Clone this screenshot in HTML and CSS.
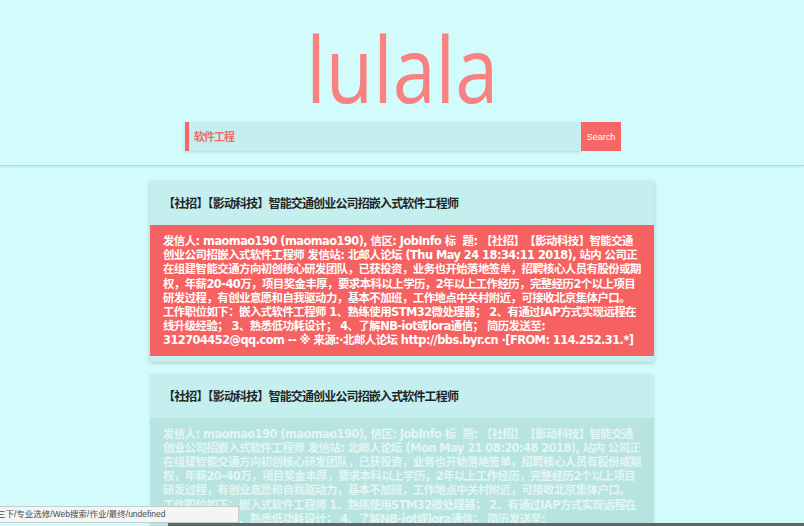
FILE: index.html
```html
<!DOCTYPE html>
<html lang="zh-CN">
<head>
<meta charset="utf-8">
<title>lulala</title>
<link rel="stylesheet" href="styles.css">
</head>
<body>
<header class="top">
  <h1 class="logo">lulala</h1>
  <form class="search">
    <div class="search-input">软件工程</div>
    <button class="search-btn" type="button">Search</button>
  </form>
</header>
<main class="results">
  <article class="card">
    <h2 class="card-title">【社招】【影动科技】智能交通创业公司招嵌入式软件工程师</h2>
    <p class="card-body">发信人: maomao190 (maomao190), 信区: JobInfo 标&nbsp; 题: 【社招】【影动科技】智能交通创业公司招嵌入式软件工程师 发信站: 北邮人论坛 (Thu May 24 18:34:11 2018), 站内 公司正在组建智能交通方向初创核心研发团队，已获投资，业务也开始落地签单，招聘核心人员有股份或期权，年薪20-40万，项目奖金丰厚，要求本科以上学历，2年以上工作经历，完整经历2个以上项目研发过程，有创业意愿和自我驱动力，基本不加班，工作地点中关村附近，可接收北京集体户口。 工作职位如下：嵌入式软件工程师 1、熟练使用STM32微处理器； 2、有通过IAP方式实现远程在线升级经验； 3、熟悉低功耗设计； 4、了解NB-iot或lora通信； 简历发送至: 312704452@qq.com -- ※ 来源:·北邮人论坛 http://bbs.byr.cn ·[FROM: 114.252.31.*]</p>
  </article>
  <article class="card card-faded">
    <h2 class="card-title">【社招】【影动科技】智能交通创业公司招嵌入式软件工程师</h2>
    <p class="card-body">发信人: maomao190 (maomao190), 信区: JobInfo 标&nbsp; 题: 【社招】【影动科技】智能交通创业公司招嵌入式软件工程师 发信站: 北邮人论坛 (Mon May 21 08:20:48 2018), 站内 公司正在组建智能交通方向初创核心研发团队，已获投资，业务也开始落地签单，招聘核心人员有股份或期权，年薪20-40万，项目奖金丰厚，要求本科以上学历，2年以上工作经历，完整经历2个以上项目研发过程，有创业意愿和自我驱动力，基本不加班，工作地点中关村附近，可接收北京集体户口。 工作职位如下：嵌入式软件工程师 1、熟练使用STM32微处理器； 2、有通过IAP方式实现远程在线升级经验； 3、熟悉低功耗设计； 4、了解NB-iot或lora通信； 简历发送至: 312704452@qq.com -- ※ 来源:·北邮人论坛 http://bbs.byr.cn ·[FROM: 114.252.31.*]</p>
  </article>
</main>
<div class="status">三下/专业选修/Web搜索/作业/最终/undefined</div>
<div class="bottom-edge"></div>
</body>
</html>
```
FILE: styles.css
```css
html {
  overflow: hidden;
}
body {
  margin: 0;
  background: #d1fcfb;
  font-family: "Noto Sans CJK SC", sans-serif;
  height: 526px;
  overflow: hidden;
}
.top {
  padding: 22px 0 14px;
  border-bottom: 1px solid #b3d9d9;
  box-shadow: 0 2px 2px rgba(120, 170, 170, 0.15);
  display: flex;
  flex-direction: column;
  align-items: center;
}
.logo {
  margin: 0;
  font-family: "Open Sans", sans-serif;
  font-weight: 400;
  font-size: 92px;
  line-height: 92px;
  color: #f88181;
  transform: scaleX(0.84);
}
.search {
  margin: 8px 0 0 2px;
  display: flex;
  height: 29px;
}
.search-input {
  width: 387px;
  border-left: 4px solid #f56666;
  background: #c6eeee;
  box-shadow: 0 1px 3px rgba(0, 0, 0, 0.15);
  padding-left: 5px;
  color: #f36a6a;
  font-weight: 700;
  font-size: 11px;
  letter-spacing: -1px;
  line-height: 29px;
}
.search-btn {
  width: 40px;
  border: 0;
  margin: 0;
  padding: 0;
  background: #f76767;
  color: #fff;
  font-family: "Liberation Sans", sans-serif;
  font-size: 9px;
}
.results {
  display: flex;
  flex-direction: column;
  align-items: center;
  gap: 12px;
  padding-top: 15px;
}
.card {
  width: 504px;
  background: #c5eeee;
  box-shadow: 0 1px 4px rgba(0, 0, 0, 0.22);
  padding-bottom: 6px;
}
.card-title {
  margin: 0;
  padding: 15px 13px;
  font-size: 12px;
  line-height: 14px;
  letter-spacing: -0.85px;
  font-weight: 700;
  color: #1d2626;
}
.card-body {
  margin: 0;
  padding: 9px 11.4px 8px 13px;
  background: #f66262;
  color: #fff;
  font-family: "DejaVu Sans", "Noto Sans CJK SC", sans-serif;
  font-weight: 700;
  font-size: 11.4px;
  line-height: 14.2px;
  letter-spacing: -0.53px;
  text-spacing-trim: space-all;
  text-autospace: no-autospace;
}
.card-faded {
  box-shadow: 0 1px 3px rgba(0, 0, 0, 0.08);
}
.card-faded .card-body {
  background: #b7e4e0;
  color: #e2f6f4;
}
.status {
  position: absolute;
  left: 0;
  bottom: 3px;
  width: 238px;
  height: 15px;
  background: #f4f6f6;
  border: 1px solid #c9cccc;
  border-left: 0;
  color: #4a4a4a;
  font-family: "Liberation Sans", "Noto Sans CJK SC", sans-serif;
  font-size: 8.5px;
  line-height: 15px;
  text-indent: -3px;
  overflow: hidden;
  white-space: nowrap;
}
.bottom-edge {
  position: absolute;
  left: 168px;
  right: 0;
  bottom: 0;
  height: 3px;
  background: #5d6868;
}
```
